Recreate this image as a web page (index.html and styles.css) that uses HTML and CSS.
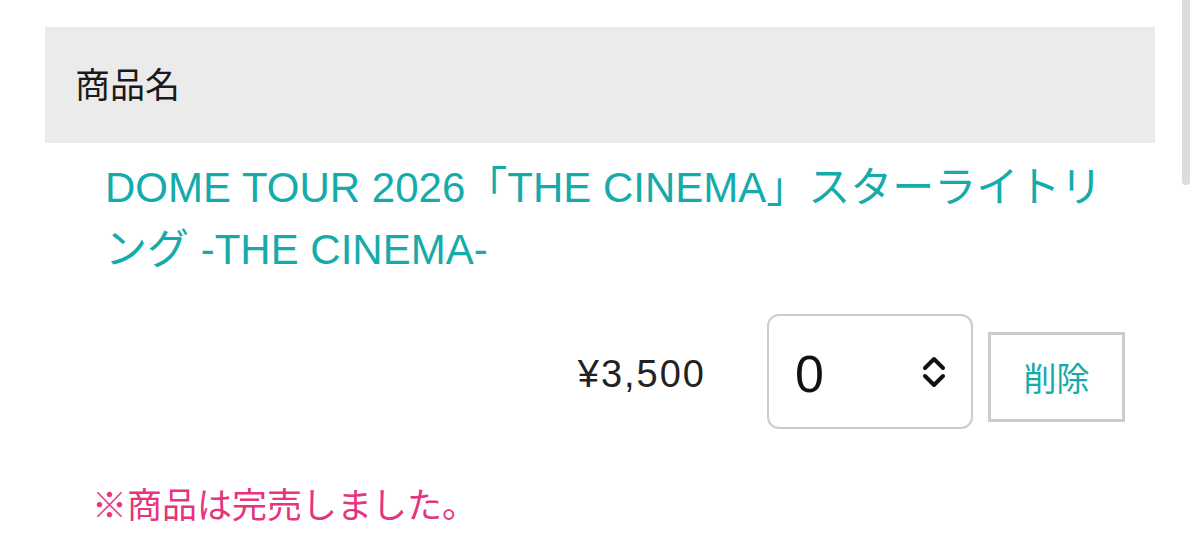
FILE: index.html
```html
<!DOCTYPE html>
<html lang="ja">
<head>
    <meta charset="UTF-8">
    <meta name="viewport" content="width=device-width, initial-scale=1.0">
    <title>カート</title>
    <link rel="stylesheet" href="styles.css">
</head>
<body>
    <div class="cart">
        <div class="cart-head">商品名</div>
        <div class="cart-item">
            <a class="item-title" href="#">DOME TOUR 2026「THE CINEMA」スターライトリング -THE CINEMA-</a>
            <div class="item-row">
                <span class="item-price">¥3,500</span>
                <div class="qty">
                    <span class="qty-value">0</span>
                    <svg class="qty-arrows" width="26" height="36" viewBox="0 0 26 36">
                        <path d="M4 14 L13 5 L22 14" fill="none" stroke="#111" stroke-width="4" stroke-linecap="round" stroke-linejoin="round"/>
                        <path d="M4 22 L13 31 L22 22" fill="none" stroke="#111" stroke-width="4" stroke-linecap="round" stroke-linejoin="round"/>
                    </svg>
                </div>
                <button class="btn-delete">削除</button>
            </div>
            <p class="soldout">※商品は完売しました。</p>
        </div>
    </div>
    <div class="scroll-thumb"></div>
</body>
</html>
```

FILE: styles.css
```css
body {
    margin: 0;
    font-family: "Liberation Sans", "Noto Sans CJK JP", sans-serif;
    color: #222;
    background: #fff;
}
.cart {
    width: 1110px;
    margin-left: 45px;
    padding-top: 27px;
}
.cart-head {
    height: 116px;
    box-sizing: border-box;
    padding: 0 0 5px 30px;
    background-color: #ebebeb;
    display: flex;
    align-items: center;
    font-family: "Noto Sans CJK JP", sans-serif;
    font-size: 35px;
    color: #1a1a1a;
}
.cart-item {
    padding: 0 30px 0 60px;
}
.item-title {
    display: block;
    margin-top: 14px;
    font-size: 42px;
    line-height: 62px;
    color: #16abab;
    text-decoration: none;
}
.item-row {
    display: flex;
    justify-content: flex-end;
    align-items: center;
    margin-top: 33px;
}
.item-price {
    font-size: 38px;
    letter-spacing: 2px;
    color: #222;
    margin-right: 61px;
    padding-top: 6px;
}
.qty {
    width: 206px;
    height: 115px;
    box-sizing: border-box;
    border: 2px solid #ccc;
    border-radius: 12px;
    display: flex;
    align-items: center;
    justify-content: space-between;
    padding: 0 24px 0 26px;
}
.qty-value {
    font-size: 52px;
    color: #111;
    padding-top: 4px;
}
.btn-delete {
    width: 137px;
    height: 90px;
    margin: 10px 0 0 15px;
    background: #fff;
    border: 3px solid #ccc;
    border-radius: 0;
    font-family: "Noto Sans CJK JP", sans-serif;
    font-size: 33px;
    color: #16abab;
    padding: 0;
}
.soldout {
    margin: 54px 0 0 -13px;
    font-family: "Noto Sans CJK JP", sans-serif;
    font-size: 35px;
    line-height: 40px;
    color: #e6347e;
}
.scroll-thumb {
    position: fixed;
    top: -10px;
    right: 10px;
    width: 8px;
    height: 195px;
    border-radius: 4px;
    background: #dcdcdc;
}
```
